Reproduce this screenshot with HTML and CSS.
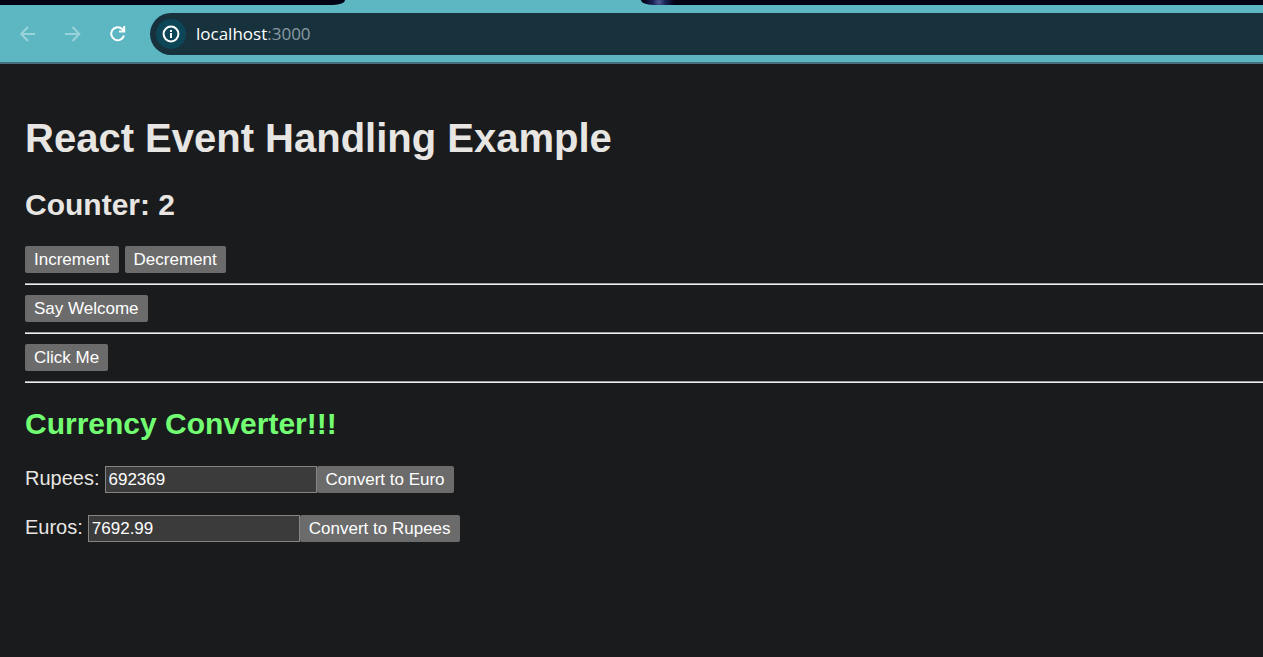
FILE: index.html
```html
<!DOCTYPE html>
<html lang="en">
<head>
<meta charset="utf-8">
<title>React Event Handling Example</title>
<link rel="stylesheet" href="styles.css">
</head>
<body>
<header class="browser">
  <div class="tabs">
    <div class="tab-strip tab-strip-left"></div>
    <div class="tab-strip tab-strip-right"></div>
  </div>
  <div class="toolbar">
    <nav class="nav">
      <button class="nav-button faded" type="button" aria-label="Back">
        <svg width="16" height="16" viewBox="0 0 16 16"><path d="M15 8H1.500M8 1L1.200 8L8 15"/></svg>
      </button>
      <button class="nav-button faded" type="button" aria-label="Forward">
        <svg width="16" height="16" viewBox="0 0 16 16"><path d="M0 8H14M7.500 1L14.300 8l-6.800 7"/></svg>
      </button>
      <button class="nav-button" type="button" aria-label="Reload">
        <svg width="16" height="16" viewBox="0 0 16 16"><path d="M14 9.500A6.500 6.500 0 1 1 12.500 3.300L14 5M14.200 0v5.500H9"/></svg>
      </button>
    </nav>
    <div class="address">
      <button class="info" type="button" aria-label="Site information">
        <svg width="18" height="18" viewBox="0 0 18 18"><circle cx="9" cy="9" r="7.400"/><path d="M9 8v5M9 5v2"/></svg>
      </button>
      <span class="url">localhost<span class="port">:3000</span></span>
    </div>
  </div>
</header>
<main class="page">
  <h1 class="title">React Event Handling Example</h1>
  <h2 class="heading">Counter: 2</h2>
  <div class="actions">
    <button class="button" type="button">Increment</button>
    <button class="button" type="button">Decrement</button>
  </div>
  <hr class="rule">
  <div class="actions"><button class="button" type="button">Say Welcome</button></div>
  <hr class="rule">
  <div class="actions"><button class="button" type="button">Click Me</button></div>
  <hr class="rule">
  <h2 class="heading converter">Currency Converter!!!</h2>
  <form class="row">
    <label class="label" for="rupees">Rupees:</label>
    <input class="field" id="rupees" type="text" value="692369">
    <button class="button" type="button">Convert to Euro</button>
  </form>
  <form class="row">
    <label class="label" for="euros">Euros:</label>
    <input class="field" id="euros" type="text" value="7692.99">
    <button class="button" type="button">Convert to Rupees</button>
  </form>
</main>
</body>
</html>
```
FILE: styles.css
```css
* { box-sizing: border-box; }

body {
  margin: 0;
  min-height: 100vh;
  overflow-x: hidden;
  background: #1a1b1d;
  color: #e8e6e3;
  font: 20px/23px "Liberation Sans", Arial, sans-serif;
}

.browser {
  background: #5db7c3;
  border-bottom: 2px solid #47707b;
}

.tabs {
  display: flex;
  justify-content: space-between;
  height: 5px;
}

.tab-strip { background: #020013; }

.tab-strip-left {
  width: 345px;
  border-bottom-right-radius: 12px 5px;
}

.tab-strip-right {
  width: calc(100% - 641px);
  border-bottom-left-radius: 12px 5px;
  background: radial-gradient(circle at 18px 2px, #505c96 0, #1c2458 6px, #020013 16px);
}

.toolbar {
  display: flex;
  align-items: center;
  gap: 24px;
  padding: 8px 0 7px 20px;
}

.nav {
  display: flex;
  gap: 29px;
}

.nav-button {
  display: flex;
  padding: 0;
  border: 0;
  background: none;
  color: #fff;
}

.faded { color: #9ad2da; }

.nav-button svg,
.info svg {
  fill: none;
  stroke: currentColor;
  stroke-width: 2;
}

.address {
  display: flex;
  flex: 1;
  align-items: center;
  gap: 10px;
  height: 42px;
  padding-left: 6px;
  border-radius: 21px 0 0 21px;
  background: #18323d;
}

.info {
  display: flex;
  align-items: center;
  justify-content: center;
  width: 30px;
  height: 30px;
  padding: 0;
  border: 0;
  border-radius: 50%;
  background: #0d4657;
  color: #fff;
}

.url {
  color: #fff;
  font: 17px/24px "Open Sans", "Noto Sans", sans-serif;
}

.port { color: #8b9ba2; }

.page { padding: 51px 0 25px 25px; }

.title {
  margin: 0 0 27px;
  font-size: 40px;
  line-height: 46px;
}

.heading {
  margin: 0 0 24px;
  font-size: 30px;
  line-height: 34px;
}

.converter {
  margin: 24px 0 25px;
  color: #72ff72;
}

.actions {
  display: flex;
  gap: 6px;
}

.button {
  height: 27px;
  padding: 0 9px;
  border: 0;
  border-radius: 2px;
  background: #6b6b6b;
  color: #fff;
  font: 17px/20px "Liberation Sans", Arial, sans-serif;
}

.rule {
  height: 2px;
  margin: 10px 0;
  border: 0;
  border-top: 1px solid #a0a0a0;
  background: #efefef;
}

.row {
  display: flex;
  align-items: baseline;
  margin: 0 0 22px;
}

.label { margin-right: 5px; }

.field {
  width: 212px;
  height: 27px;
  padding: 0 3px;
  border: 1px solid #858585;
  border-radius: 0;
  background: #3b3b3b;
  color: #fff;
  font: 17px/20px "Liberation Sans", Arial, sans-serif;
}
```
